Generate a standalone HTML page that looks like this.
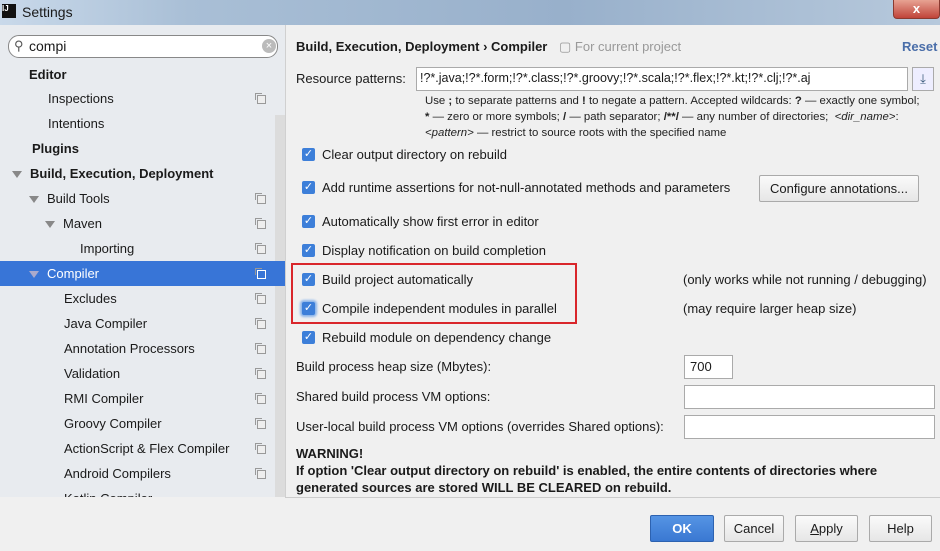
<!DOCTYPE html>
<html><head><style>
body{margin:0;width:940px;height:551px;overflow:hidden;font-family:"Liberation Sans",sans-serif;font-size:13px;color:#1a1a1a;background:#f0f0f0;position:relative}
.a{position:absolute;white-space:nowrap}
#title{left:0;top:0;width:940px;height:25px;background:linear-gradient(90deg,#c9d9ea 0%,#a9bfd6 20%,#98b0cb 60%,#b7c9dc 100%)}
#side{left:0;top:25px;width:285px;height:472px;background:#e8ebef;border-right:1px solid #d0d0d0}
.it{position:absolute;left:0;width:272px;height:25px;line-height:25px;box-sizing:border-box;white-space:nowrap}
.cp{position:absolute;right:6px;top:9px;width:7px;height:7px;border:1px solid #999;background:#eee}
.cp:after{content:"";position:absolute;left:-3px;top:-3px;width:6px;height:6px;border-left:1px solid #999;border-top:1px solid #999}
.tri{display:inline-block;width:0;height:0;border-left:5px solid transparent;border-right:5px solid transparent;border-top:7px solid #888;margin-right:8px;vertical-align:middle}
.cb{position:absolute;width:13px;height:13px;background:#3d7fd9;border-radius:2px;color:#fff;font-size:11px;line-height:13px;text-align:center}
.btn{position:absolute;top:515px;height:25px;border:1px solid #aaa;border-radius:2px;background:linear-gradient(#fafafa,#e6e6e6);text-align:center;line-height:25px}
.inp{position:absolute;background:#fff;border:1px solid #aaa;height:22px}
</style></head><body>
<div class="a" id="title"></div>
<div class="a" style="left:2px;top:4px;width:14px;height:14px;background:#111;color:#fff;font-size:8px;font-weight:bold;line-height:10px">IJ</div>
<div class="a" style="left:22px;top:4px;font-size:14px">Settings</div>
<div class="a" style="left:893px;top:0;width:45px;height:18px;background:linear-gradient(#e7a393,#c0443a);border:1px solid #8a3a30;border-top:0;border-radius:0 0 4px 4px;color:#fff;text-align:center;font-weight:bold;line-height:17px">x</div>
<div class="a" id="side"></div>
<div class="a" style="left:8px;top:35px;width:268px;height:21px;background:#fff;border:1px solid #888;border-radius:11px"></div>
<div class="a" style="left:14px;top:38px;font-size:13px;color:#555">&#9906;</div>
<div class="a" style="left:29px;top:38px;font-size:14px">compi</div>
<div class="a" style="left:262px;top:39px;width:14px;height:14px;border-radius:7px;background:#bbb;color:#fff;font-size:11px;line-height:14px;text-align:center">×</div>
<div class="a" style="left:275px;top:115px;width:10px;height:382px;background:#dcdcdc"></div>
<div class="it" style="top:62px;padding-left:29px;font-weight:bold">Editor</div>
<div class="it" style="top:86px;padding-left:48px">Inspections<span class="cp"></span></div>
<div class="it" style="top:111px;padding-left:48px">Intentions</div>
<div class="it" style="top:136px;padding-left:32px;font-weight:bold">Plugins</div>
<div class="it" style="top:161px;padding-left:12px;font-weight:bold"><span class="tri"></span>Build, Execution, Deployment</div>
<div class="it" style="top:186px;padding-left:29px"><span class="tri"></span>Build Tools<span class="cp"></span></div>
<div class="it" style="top:211px;padding-left:45px"><span class="tri"></span>Maven<span class="cp"></span></div>
<div class="it" style="top:236px;padding-left:80px">Importing<span class="cp"></span></div>
<div class="it" style="top:261px;width:285px;background:#3875d7;color:#fff;padding-left:29px"><span class="tri" style="border-top-color:#aac"></span>Compiler<span class="cp" style="right:19px;background:#3875d7;border-color:#fff"></span></div>
<div class="it" style="top:286px;padding-left:64px">Excludes<span class="cp"></span></div>
<div class="it" style="top:311px;padding-left:64px">Java Compiler<span class="cp"></span></div>
<div class="it" style="top:336px;padding-left:64px">Annotation Processors<span class="cp"></span></div>
<div class="it" style="top:361px;padding-left:64px">Validation<span class="cp"></span></div>
<div class="it" style="top:386px;padding-left:64px">RMI Compiler<span class="cp"></span></div>
<div class="it" style="top:411px;padding-left:64px">Groovy Compiler<span class="cp"></span></div>
<div class="it" style="top:436px;padding-left:64px">ActionScript &amp; Flex Compiler<span class="cp"></span></div>
<div class="it" style="top:461px;padding-left:64px">Android Compilers<span class="cp"></span></div>
<div class="it" style="top:486px;padding-left:64px;height:11px;overflow:hidden">Kotlin Compiler</div>

<div class="a" style="left:296px;top:39px;font-weight:bold">Build, Execution, Deployment › Compiler</div>
<div class="a" style="left:559px;top:39px;color:#999">▢ For current project</div>
<div class="a" style="left:902px;top:39px;font-weight:bold;color:#4a6ea9">Reset</div>
<div class="a" style="left:296px;top:71px">Resource patterns:</div>
<div class="inp" style="left:416px;top:67px;width:490px"></div>
<div class="a" style="left:420px;top:71px;font-size:12.5px">!?*.java;!?*.form;!?*.class;!?*.groovy;!?*.scala;!?*.flex;!?*.kt;!?*.clj;!?*.aj</div>
<div class="a" style="left:912px;top:67px;width:20px;height:22px;border:1px solid #aaa;background:#eef;color:#357;text-align:center;line-height:22px">⤓</div>
<div class="a" style="left:425px;top:93px;font-size:11.4px;line-height:16px;color:#222">Use <b>;</b> to separate patterns and <b>!</b> to negate a pattern. Accepted wildcards: <b>?</b> — exactly one symbol;<br><b>*</b> — zero or more symbols; <b>/</b> — path separator; <b>/**/</b> — any number of directories; &nbsp;<i>&lt;dir_name&gt;</i>:<br><i>&lt;pattern&gt;</i> — restrict to source roots with the specified name</div>

<div class="cb" style="left:302px;top:148px">✓</div><div class="a" style="left:322px;top:147px">Clear output directory on rebuild</div>
<div class="cb" style="left:302px;top:181px">✓</div><div class="a" style="left:322px;top:180px">Add runtime assertions for not-null-annotated methods and parameters</div>
<div class="btn" style="left:759px;top:175px;width:158px">Configure annotations...</div>
<div class="cb" style="left:302px;top:215px">✓</div><div class="a" style="left:322px;top:214px">Automatically show first error in editor</div>
<div class="cb" style="left:302px;top:244px">✓</div><div class="a" style="left:322px;top:243px">Display notification on build completion</div>
<div class="a" style="left:291px;top:263px;width:286px;height:61px;border:2px solid #d9262b;box-sizing:border-box"></div>
<div class="cb" style="left:302px;top:273px">✓</div><div class="a" style="left:322px;top:272px">Build project automatically</div>
<div class="a" style="left:683px;top:272px">(only works while not running / debugging)</div>
<div class="cb" style="left:302px;top:302px;box-shadow:0 0 2px 2px #8ab4ea">✓</div><div class="a" style="left:322px;top:301px">Compile independent modules in parallel</div>
<div class="a" style="left:683px;top:301px">(may require larger heap size)</div>
<div class="cb" style="left:302px;top:331px">✓</div><div class="a" style="left:322px;top:330px">Rebuild module on dependency change</div>
<div class="a" style="left:296px;top:359px">Build process heap size (Mbytes):</div>
<div class="inp" style="left:684px;top:355px;width:47px"></div><div class="a" style="left:690px;top:359px">700</div>
<div class="a" style="left:296px;top:389px">Shared build process VM options:</div>
<div class="inp" style="left:684px;top:385px;width:249px"></div>
<div class="a" style="left:296px;top:419px">User-local build process VM options (overrides Shared options):</div>
<div class="inp" style="left:684px;top:415px;width:249px"></div>
<div class="a" style="left:296px;top:445px;font-weight:bold;line-height:17px">WARNING!<br>If option 'Clear output directory on rebuild' is enabled, the entire contents of directories where<br>generated sources are stored WILL BE CLEARED on rebuild.</div>
<div class="a" style="left:285px;top:497px;width:655px;height:1px;background:#ccc"></div>
<div class="btn" style="left:650px;width:62px;background:linear-gradient(#5594e4,#3a78d2);border-color:#2d62b0;color:#fff;font-weight:bold">OK</div>
<div class="btn" style="left:724px;width:58px">Cancel</div>
<div class="btn" style="left:795px;width:61px"><u>A</u>pply</div>
<div class="btn" style="left:869px;width:61px">Help</div>
</body></html>
